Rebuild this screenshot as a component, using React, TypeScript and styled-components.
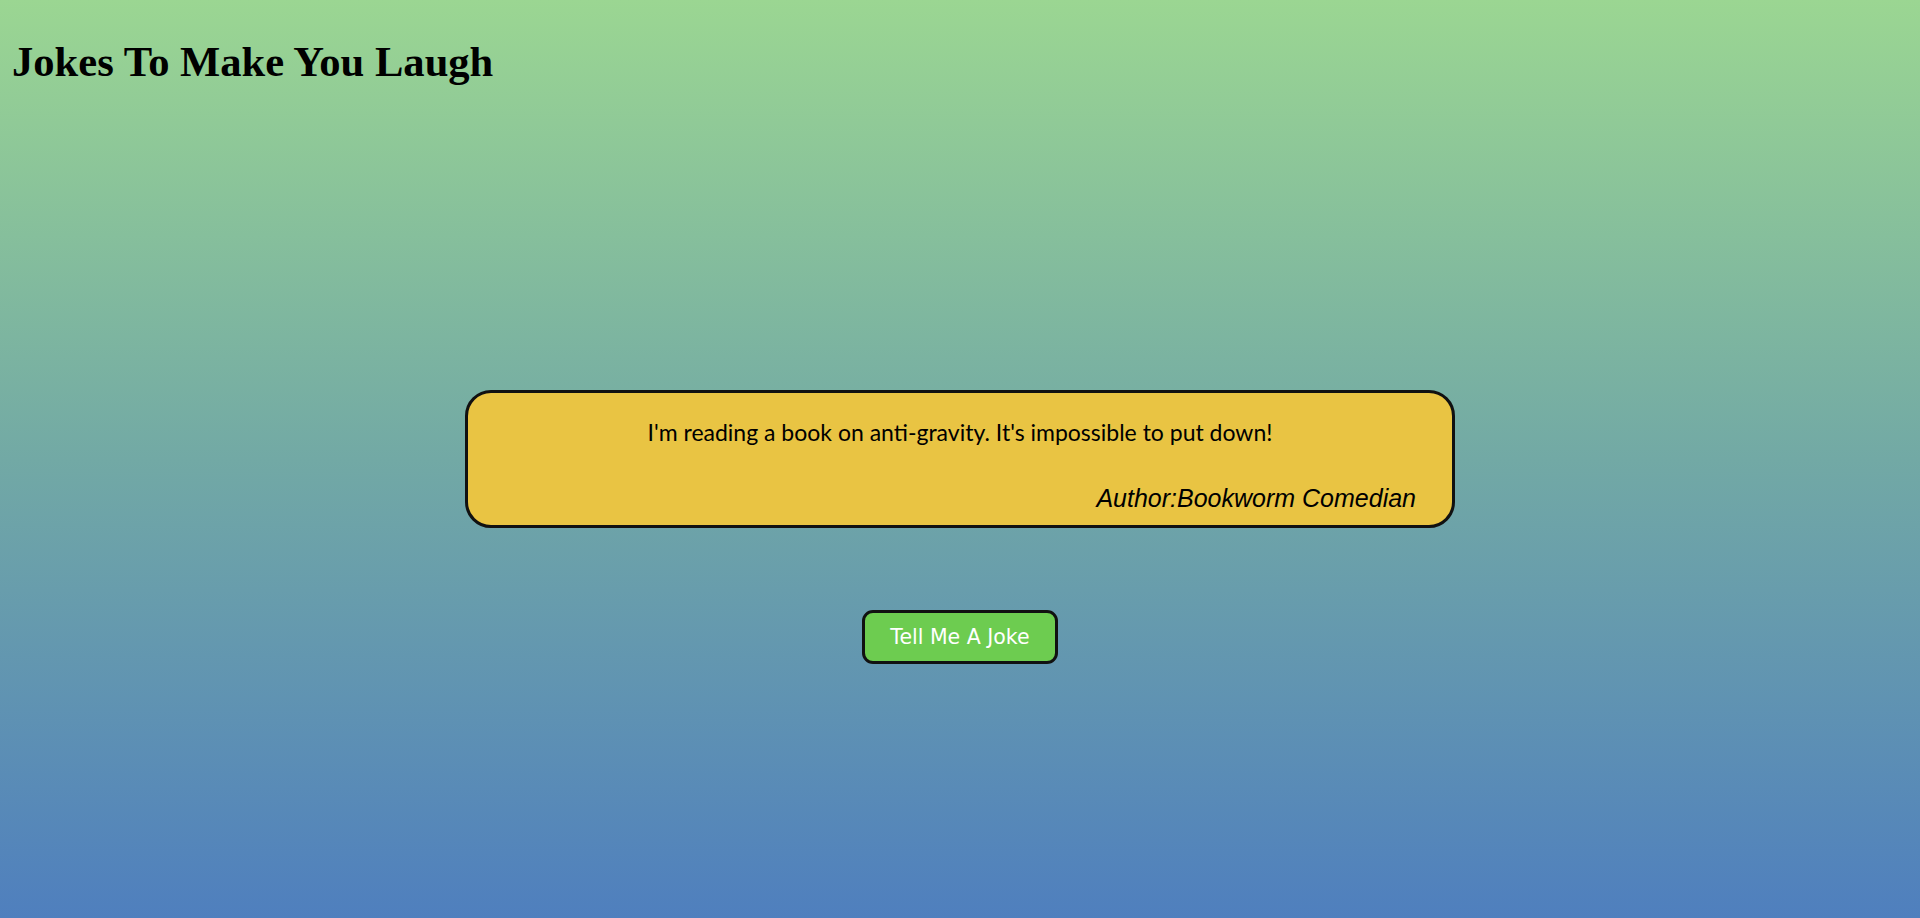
import React from "react";
import styled, { createGlobalStyle } from "styled-components";

const Global = createGlobalStyle`
  html, body { margin: 0; padding: 0; }
  body { font-family: "Liberation Serif", serif; }
`;

const Page = styled.div`
  min-height: 918px;
  box-sizing: border-box;
  padding: 8px 12px;
  background: linear-gradient(to bottom, #9bd692 0%, #72a9a5 50%, #4f7fbe 100%);
  display: flex;
  flex-direction: column;
`;

const Title = styled.h1`
  margin: 30px 0 0 0;
  font-family: "Liberation Serif", serif;
  font-weight: bold;
  font-size: 42.6px;
  line-height: 48px;
  color: #000;
`;

const Main = styled.main`
  display: flex;
  flex-direction: column;
  align-items: center;
  margin-top: 304px;
`;

const Card = styled.section`
  box-sizing: border-box;
  width: 990px;
  height: 138px;
  background: #e9c443;
  border: 3px solid #111;
  border-radius: 26px;
  display: flex;
  flex-direction: column;
  padding: 24px 36px 0 36px;
`;

const JokeText = styled.p`
  margin: 0;
  text-align: center;
  font-family: "Lato", "Open Sans", sans-serif;
  font-size: 23px;
  line-height: 30px;
  color: #000;
`;

const Author = styled.p`
  margin: 36px 0 0 0;
  text-align: right;
  font-family: "Liberation Sans", Arial, sans-serif;
  font-style: italic;
  font-size: 25px;
  line-height: 30px;
  color: #000;
`;

const JokeButton = styled.button`
  margin-top: 82px;
  width: 196px;
  height: 54px;
  box-sizing: border-box;
  background: #6dcc50;
  border: 3px solid #111;
  border-radius: 11px;
  color: #fff;
  font-family: "DejaVu Sans", Verdana, sans-serif;
  font-size: 20.5px;
  cursor: pointer;
`;

export default function App() {
  return (
    <>
      <Global />
      <Page>
        <Title>Jokes To Make You Laugh</Title>
        <Main>
          <Card>
            <JokeText>I'm reading a book on anti-gravity. It's impossible to put down!</JokeText>
            <Author>Author:Bookworm Comedian</Author>
          </Card>
          <JokeButton>Tell Me A Joke</JokeButton>
        </Main>
      </Page>
    </>
  );
}
